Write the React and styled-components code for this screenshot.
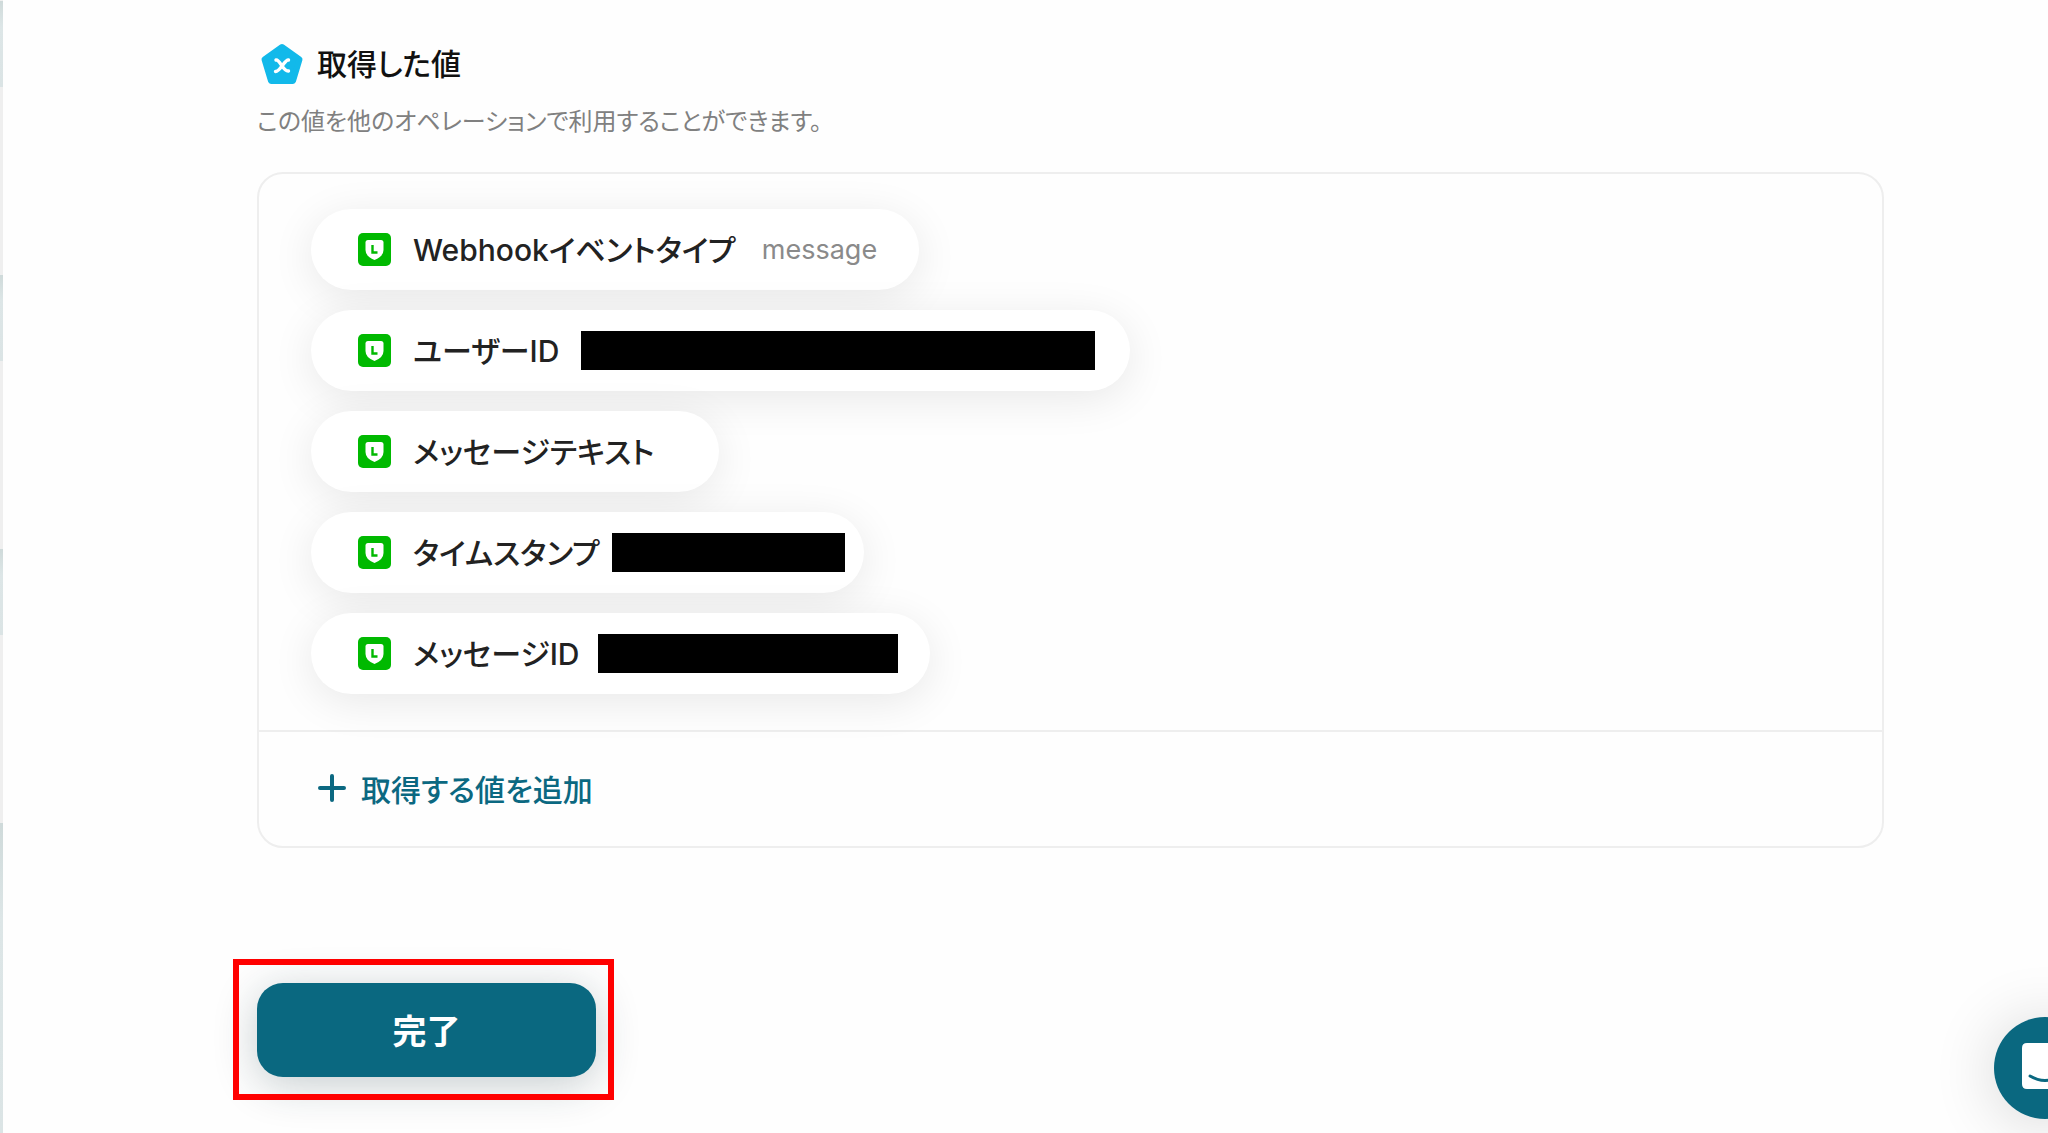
import React from 'react';
import styled, { createGlobalStyle } from 'styled-components';

const GlobalStyle = createGlobalStyle`
  * {
    box-sizing: border-box;
  }

  body {
    margin: 0;
    background-color: #fefefe;
    color: #222;
    font-family: Inter, 'Noto Sans CJK JP', sans-serif;
    font-feature-settings: 'palt';
    overflow: hidden;
  }

  button {
    font-feature-settings: inherit;
  }
`;

const Layout = styled.div`
  display: flex;
  min-height: 100vh;
`;

const Rail = styled.aside`
  display: flex;
  flex-direction: column;
  gap: 188px;
  width: 3px;
  padding-top: 1px;
  max-height: 100vh;
  background-color: #efefef;
`;

const RailItem = styled.div`
  flex: none;
  height: ${props => (props.$tall ? 320 : 86)}px;
  background: linear-gradient(#cfdada, #dde6e7 30%, #dbe4e5);
`;

const Main = styled.main`
  flex: 1;
  padding: 40px 164px 32px 254px;
`;

const Heading = styled.header`
  display: flex;
  align-items: center;
  gap: 14px;
  height: 48px;
  padding-left: 4px;
`;

const Title = styled.h2`
  margin: 0;
  color: #111;
  font-size: 30px;
  font-weight: 500;
  line-height: 48px;
`;

const Description = styled.p`
  margin: 18px 0 0;
  color: #808080;
  font-size: 24px;
  line-height: 32px;
`;

const Panel = styled.section`
  margin-top: 34px;
  border: 2px solid #eee;
  border-radius: 26px;
`;

const ValueList = styled.ul`
  display: flex;
  flex-direction: column;
  align-items: flex-start;
  gap: 20px;
  margin: 0;
  padding: 35px 52px 36px;
  border-bottom: 2px solid #eee;
  list-style: none;
`;

const Chip = styled.li`
  display: flex;
  align-items: center;
  height: 81px;
  padding: 0 ${props => props.$end}px 0 47px;
  border-radius: 41px;
  background-color: #fff;
  box-shadow: 0 8px 44px rgba(0, 0, 0, 0.09);
`;

const ChipName = styled.span`
  margin-left: 22px;
  font-size: 30px;
  font-weight: 500;
  line-height: 40px;
  white-space: nowrap;
`;

const ChipValue = styled.span`
  margin-left: ${props => props.$gap}px;
  color: #8a8a8a;
  font-size: 27px;
`;

const Redacted = styled.span`
  width: ${props => props.$width}px;
  height: 39px;
  margin-left: ${props => props.$gap}px;
  background-color: #000;
`;

const AddButton = styled.button`
  display: flex;
  align-items: center;
  gap: 14px;
  height: 114px;
  padding: 0 58px 2px;
  border: none;
  background: none;
  color: #0b6881;
  font-family: inherit;
  font-size: 30px;
  font-weight: 500;
  cursor: pointer;
`;

const Highlight = styled.div`
  position: relative;
  width: fit-content;
  margin: 111px 0 0 -24px;
  padding: 24px 18px 23px 24px;

  &::after {
    content: '';
    position: absolute;
    inset: 0;
    border: 6px solid #ff0000;
    pointer-events: none;
  }
`;

const DoneButton = styled.button`
  display: block;
  width: 339px;
  height: 94px;
  padding: 0 0 2px;
  border: none;
  border-radius: 26px;
  background-color: #0a6880;
  box-shadow: 0 8px 44px rgba(20, 50, 60, 0.24);
  color: #fff;
  font-family: inherit;
  font-size: 34px;
  font-weight: 700;
  cursor: pointer;
`;

const ChatButton = styled.button`
  position: fixed;
  right: -48px;
  bottom: 14px;
  display: flex;
  align-items: center;
  justify-content: center;
  width: 102px;
  height: 102px;
  padding: 0;
  border: none;
  border-radius: 50%;
  background-color: #0a6880;
  box-shadow: 0 4px 64px rgba(0, 0, 0, 0.16);
  cursor: pointer;
`;

const PentagonIcon = () => (
  <svg width="42" height="42" viewBox="0 0 42 42" aria-hidden="true">
    <path
      d="M21 4 L38.5 16.5 L32 38 H10 L3.5 16.5 Z"
      fill="#12b9ea"
      stroke="#12b9ea"
      strokeWidth="6"
      strokeLinejoin="round"
    />
    <path
      d="M15 17 C19 16 22 29 27.500 28 M27.500 17 C24 16 19 29 14.500 28.500"
      fill="none"
      stroke="#fff"
      strokeWidth="3.400"
      strokeLinecap="round"
    />
  </svg>
);

const ShieldIcon = () => (
  <svg width="33" height="33" viewBox="0 0 33 33" aria-hidden="true">
    <rect width="33" height="33" rx="5" fill="#00b900" />
    <path
      d="M10 7 H23 Q25.500 7 25.500 9.500 V17 Q25.500 23.500 16.500 27 Q7.500 23.500 7.500 17 V9.500 Q7.500 7 10 7 Z"
      fill="#fff"
    />
    <path d="M14.500 12 V19.500 H19.500" fill="none" stroke="#00b900" strokeWidth="2.400" />
  </svg>
);

const PlusIcon = () => (
  <svg width="30" height="30" viewBox="0 0 30 30" aria-hidden="true">
    <path
      d="M15 3 V27 M3 15 H27"
      stroke="currentColor"
      strokeWidth="4"
      strokeLinecap="round"
    />
  </svg>
);

const ChatIcon = () => (
  <svg width="46" height="54" viewBox="0 0 46 54" aria-hidden="true">
    <path d="M5 2 H41 Q46 2 46 7 V54 L34 48 H5 Q0 48 0 43 V7 Q0 2 5 2 Z" fill="#fff" />
    <path
      d="M8 35 Q23 44 38 35"
      fill="none"
      stroke="#0a6880"
      strokeWidth="3"
      strokeLinecap="round"
    />
  </svg>
);

const values = [
  { name: 'Webhookイベントタイプ', value: 'message', gap: 26, end: 42 },
  { name: 'ユーザーID', hidden: 514, gap: 22, end: 35 },
  { name: 'メッセージテキスト', end: 65 },
  { name: 'タイムスタンプ', hidden: 233, gap: 12, end: 19 },
  { name: 'メッセージID', hidden: 300, gap: 18, end: 32 }
];

export default function App() {
  return (
    <Layout>
      <GlobalStyle />
      <Rail>
        <RailItem />
        <RailItem />
        <RailItem />
        <RailItem $tall />
      </Rail>
      <Main>
        <Heading>
          <PentagonIcon />
          <Title>取得した値</Title>
        </Heading>
        <Description>この値を他のオペレーションで利用することができます。</Description>
        <Panel>
          <ValueList>
            {values.map(item => (
              <Chip key={item.name} $end={item.end}>
                <ShieldIcon />
                <ChipName>{item.name}</ChipName>
                {item.value && <ChipValue $gap={item.gap}>{item.value}</ChipValue>}
                {item.hidden && <Redacted $width={item.hidden} $gap={item.gap} />}
              </Chip>
            ))}
          </ValueList>
          <AddButton type="button">
            <PlusIcon />
            取得する値を追加
          </AddButton>
        </Panel>
        <Highlight>
          <DoneButton type="button">完了</DoneButton>
        </Highlight>
      </Main>
      <ChatButton type="button" aria-label="チャットを開く">
        <ChatIcon />
      </ChatButton>
    </Layout>
  );
}
